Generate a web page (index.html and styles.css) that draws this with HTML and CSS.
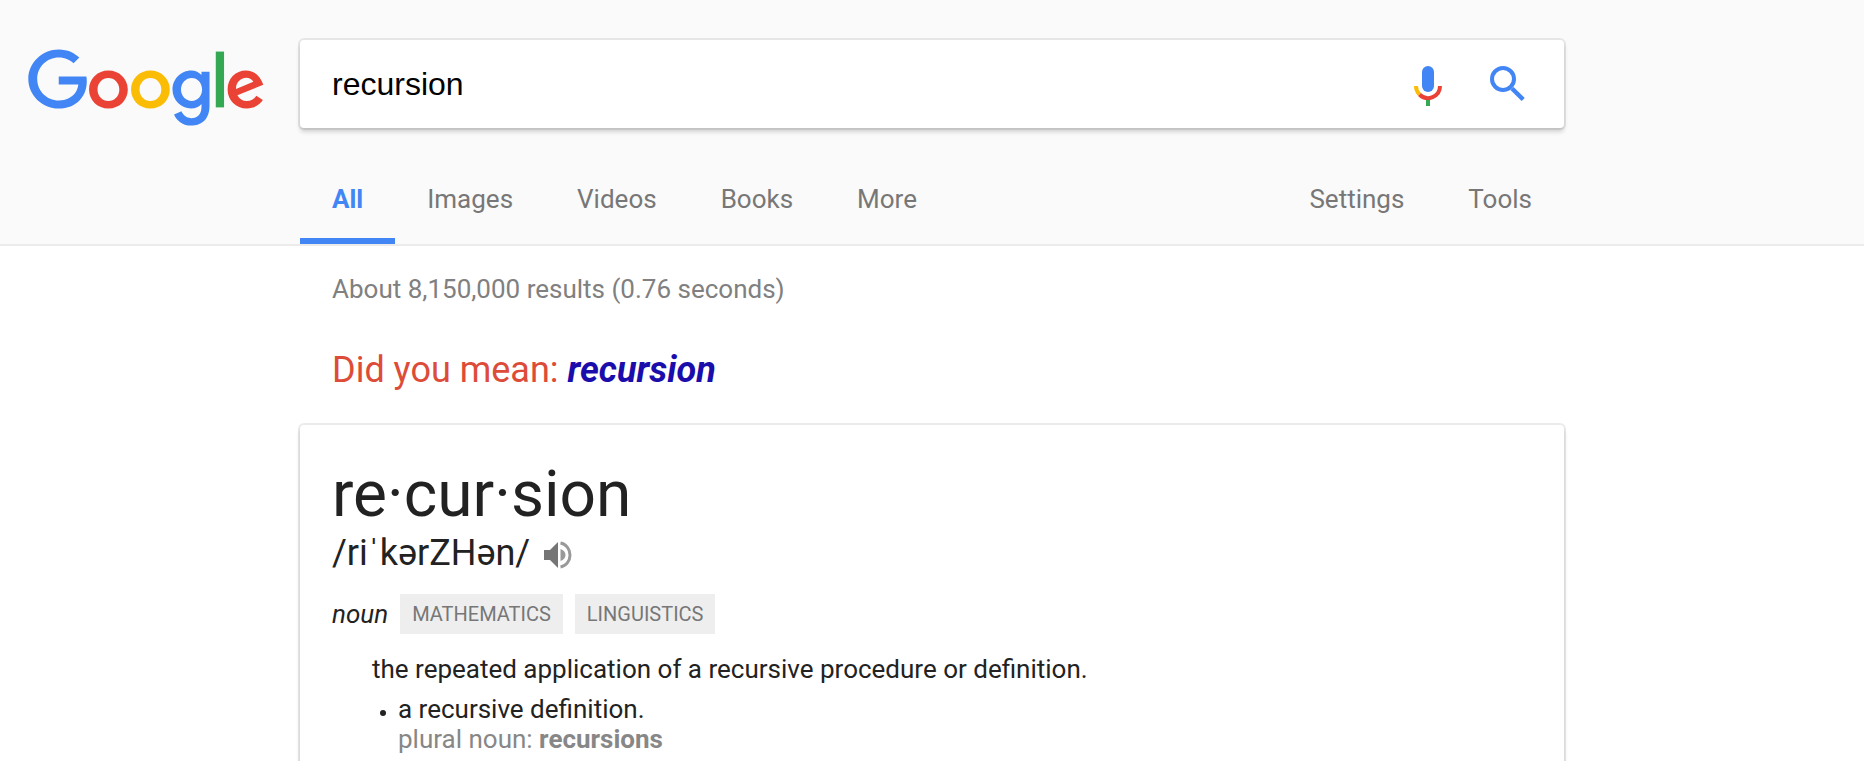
FILE: index.html
```html
<!DOCTYPE html>
<html lang="en">
<head>
<meta charset="utf-8">
<title>recursion - Google Search</title>
<link rel="stylesheet" href="styles.css">
</head>
<body>
<header class="header">
  <a class="logo" href="#" aria-label="Google">
    <svg class="logo-art" viewBox="0 0 272 92" preserveAspectRatio="none" aria-hidden="true">
      <path transform="translate(-1.200)" fill="#EA4335" d="M115.75 47.18c0 12.77-9.99 22.18-22.25 22.18s-22.25-9.41-22.25-22.18C71.25 34.32 81.24 25 93.5 25s22.25 9.32 22.25 22.18zm-9.74 0c0-7.98-5.79-13.44-12.51-13.44S80.99 39.2 80.99 47.18c0 7.9 5.79 13.44 12.51 13.44s12.51-5.55 12.51-13.44z"/>
      <path transform="translate(-1)" fill="#FBBC05" d="M163.75 47.18c0 12.77-9.99 22.18-22.25 22.18s-22.25-9.41-22.25-22.18c0-12.86 9.99-22.18 22.25-22.18s22.25 9.32 22.25 22.18zm-9.74 0c0-7.98-5.79-13.44-12.51-13.44s-12.51 5.46-12.51 13.44c0 7.9 5.79 13.44 12.51 13.44s12.51-5.55 12.51-13.44z"/>
      <path transform="translate(-1.400)" fill="#4285F4" d="M209.75 26.34v39.82c0 16.38-9.66 23.07-21.08 23.07-10.75 0-17.22-7.19-19.66-13.07l8.48-3.53c1.51 3.61 5.21 7.87 11.17 7.87 7.31 0 11.84-4.51 11.84-13v-3.19h-.34c-2.18 2.69-6.38 5.04-11.68 5.04-11.09 0-21.25-9.66-21.25-22.09 0-12.52 10.16-22.26 21.25-22.26 5.29 0 9.49 2.35 11.68 4.96h.34v-3.61h9.25zm-8.56 20.92c0-7.81-5.21-13.52-11.84-13.52-6.72 0-12.35 5.71-12.35 13.52 0 7.73 5.63 13.36 12.35 13.36 6.63 0 11.84-5.63 11.84-13.36z"/>
      <path fill="#34A853" d="M225 3v65h-9.5V3h9.5z"/>
      <path fill="#EA4335" d="M262.02 54.48l7.56 5.04c-2.44 3.61-8.32 9.83-18.48 9.83-12.6 0-22.01-9.74-22.01-22.18 0-13.19 9.49-22.18 20.92-22.18 11.51 0 17.14 9.16 18.98 14.11l1.01 2.52-29.65 12.28c2.27 4.45 5.8 6.72 10.75 6.72 4.96 0 8.4-2.44 10.92-6.14zm-23.27-7.98l19.82-8.23c-1.09-2.77-4.37-4.7-8.23-4.7-4.95 0-11.84 4.37-11.59 12.93z"/>
      <path fill="#4285F4" d="M35.29 41.41V32H67c.31 1.64.47 3.58.47 5.68 0 7.06-1.93 15.79-8.15 22.01-6.05 6.3-13.78 9.66-24.02 9.66C16.32 69.35.36 53.89.36 34.91.36 15.93 16.32.47 35.3.47c10.5 0 17.98 4.12 23.6 9.49l-6.64 6.64c-4.03-3.78-9.49-6.72-16.97-6.72-13.86 0-24.7 11.17-24.7 25.03 0 13.86 10.84 25.03 24.7 25.03 8.99 0 14.11-3.61 17.39-6.89 2.66-2.66 4.41-6.46 5.1-11.65l-22.49.01z"/>
    </svg>
  </a>
  <form class="search">
    <input class="search-input" type="text" aria-label="Search" value="recursion">
    <button class="icon-button" type="button" aria-label="Search by voice">
      <svg width="28" height="40" viewBox="0 0 28 40" aria-hidden="true">
        <rect x="8" y="0" width="12" height="26" rx="6" fill="#4285F4"/>
        <path d="M2 20a12 12 0 0 0 3.5 8.5" fill="none" stroke="#FBBC05" stroke-width="4"/>
        <path d="M5.5 28.5A12 12 0 0 0 26 20" fill="none" stroke="#EA4335" stroke-width="4"/>
        <path d="M12 34h4v6h-4z" fill="#34A853"/>
      </svg>
    </button>
    <button class="icon-button" type="submit" aria-label="Search">
      <svg width="36" height="40" viewBox="0 0 36 40" aria-hidden="true" fill="none" stroke="#4285F4" stroke-width="4">
        <circle cx="13" cy="13" r="11"/>
        <path d="M22 22.500L33.200 33.500" stroke-width="4.500"/>
      </svg>
    </button>
  </form>
  <nav class="tabs">
    <a class="tab tab-active" href="#">All</a>
    <a class="tab" href="#">Images</a>
    <a class="tab" href="#">Videos</a>
    <a class="tab" href="#">Books</a>
    <a class="tab" href="#">More</a>
    <a class="tab tab-right" href="#">Settings</a>
    <a class="tab" href="#">Tools</a>
  </nav>
</header>
<main class="results">
  <p class="stats">About 8,150,000 results (0.76 seconds)</p>
  <p class="suggestion">Did you mean: <a href="#">recursion</a></p>
  <article class="card">
    <h1 class="headword">re·cur·sion</h1>
    <div class="phonetic">
      <span>/riˈkərZHən/</span>
      <button class="speaker" type="button" aria-label="Listen">
        <svg width="28" height="28" viewBox="0 0 28 28" aria-hidden="true">
          <path d="M0 9h6l8-8v26l-8-8H0z" fill="#757575"/>
          <path d="M16.500 8c3 1 5 3.200 5 6s-2 5-5 6z" fill="#999"/>
          <path d="M16.500 2C22 3 26 8 26 14s-4 11-9.500 12" fill="none" stroke="#999" stroke-width="3"/>
        </svg>
      </button>
    </div>
    <div class="word-class">
      <i>noun</i>
      <span class="tag">MATHEMATICS</span>
      <span class="tag">LINGUISTICS</span>
    </div>
    <div class="definition">
      <p>the repeated application of a recursive procedure or definition.</p>
      <ul class="senses">
        <li class="sense">
          <div>
            <p>a recursive definition.</p>
            <p class="forms">plural noun: <b>recursions</b></p>
          </div>
        </li>
      </ul>
    </div>
  </article>
</main>
</body>
</html>
```
FILE: styles.css
```css
* {
  box-sizing: border-box;
}

body {
  margin: 0;
  background: #fff;
  color: #222;
  font-family: Roboto, "Liberation Sans", sans-serif;
  font-size: 26px;
  line-height: 30px;
}

p,
h1,
ul {
  margin: 0;
  padding: 0;
}

a {
  text-decoration: none;
}

button {
  border: 0;
  padding: 0;
  background: none;
}

svg {
  display: block;
}

.header {
  display: grid;
  grid-template-columns: minmax(300px, 1fr) minmax(0, 1264px) minmax(0, 1fr);
  padding-top: 40px;
  background: #fafafa;
  border-bottom: 2px solid #ebebeb;
}

.logo {
  padding: 9px 0 0 28px;
}

.logo-art {
  width: 237px;
  height: 79px;
}

.search {
  display: flex;
  align-items: center;
  height: 88px;
  padding: 0 38px 0 32px;
  gap: 48px;
  background: #fff;
  border-radius: 4px;
  box-shadow: 0 4px 4px rgba(0, 0, 0, 0.16), 0 0 0 2px rgba(0, 0, 0, 0.08);
}

.search-input {
  flex: 1;
  min-width: 0;
  padding: 0;
  border: 0;
  outline: 0;
  background: none;
  color: #000;
  font: 32px "Liberation Sans", Arial, sans-serif;
}

.icon-button {
  padding-top: 4px;
}

.tabs {
  grid-column: 2;
  display: flex;
  margin-top: 40px;
}

.tab {
  padding: 16px 32px 24px;
  border-bottom: 6px solid transparent;
  color: #777;
}

.tab-active {
  border-color: #4285f4;
  color: #4285f4;
  font-weight: bold;
}

.tab-right {
  margin-left: auto;
}

.results {
  width: min(1264px, 100%);
  margin: 0 auto;
}

.stats {
  padding: 28px 32px 0;
  color: #808080;
}

.suggestion {
  padding: 44px 32px 33px;
  color: #dd4b39;
  font-size: 36px;
  line-height: 44px;
}

.suggestion a {
  color: #1a0dab;
  font-style: italic;
  font-weight: bold;
}

.card {
  padding: 32px 32px 16px;
  border-radius: 4px;
  background: #fff;
  box-shadow: 0 4px 4px rgba(0, 0, 0, 0.16), 0 0 0 2px rgba(0, 0, 0, 0.08);
}

.headword {
  font-size: 64px;
  font-weight: normal;
  line-height: 76px;
}

.phonetic {
  display: flex;
  align-items: center;
  gap: 14px;
  font-size: 36px;
  line-height: 40px;
}

.speaker {
  padding-top: 4px;
}

.word-class {
  display: flex;
  align-items: center;
  gap: 12px;
  margin-top: 21px;
}

.tag {
  padding: 0 12px;
  background: #eee;
  color: #777;
  font-size: 20px;
  line-height: 40px;
}

.definition {
  padding: 20px 0 0 40px;
}

.senses {
  margin-top: 10px;
  padding-left: 8px;
  list-style: none;
}

.sense {
  display: flex;
  gap: 12px;
}

.sense::before {
  content: "";
  width: 6px;
  height: 6px;
  margin-top: 16px;
  border-radius: 50%;
  background: #222;
}

.forms {
  color: #878787;
}
```
